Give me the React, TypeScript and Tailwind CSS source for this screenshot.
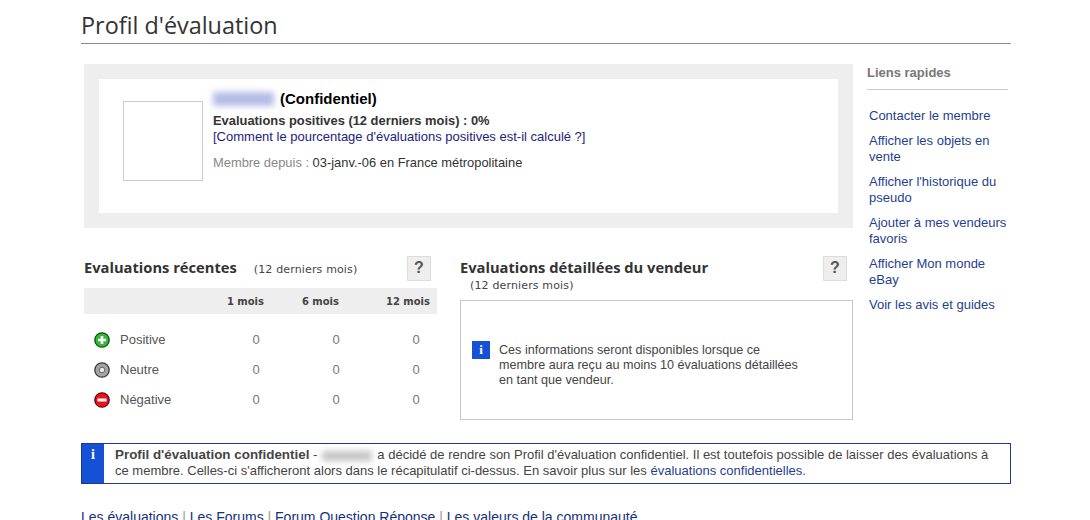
const arial = "font-['Liberation_Sans',Arial,sans-serif]"

const quickLinks = [
  'Contacter le membre',
  'Afficher les objets en vente',
  "Afficher l'historique du pseudo",
  'Ajouter à mes vendeurs favoris',
  'Afficher Mon monde eBay',
  'Voir les avis et guides',
]

function RatingIcon({ kind }: { kind: 'pos' | 'neu' | 'neg' }) {
  const fill = kind === 'pos' ? '#35b835' : kind === 'neg' ? '#ee101c' : '#a4a4a4'
  const edge = kind === 'pos' ? '#0b4f10' : kind === 'neg' ? '#5a080c' : '#3a3a3a'
  return (
    <svg width="16" height="16" viewBox="0 0 16 16">
      <circle cx="8" cy="8" r="7.2" fill={fill} stroke={edge} strokeWidth="1.3" />
      {kind === 'pos' && <path d="M6.7 4h2.6v2.7H12v2.6H9.3V12H6.7V9.3H4V6.7h2.7z" fill="#fff" />}
      {kind === 'neu' && <circle cx="8" cy="8" r="2.8" fill="#e8e8e8" stroke="#666" strokeWidth="1" />}
      {kind === 'neg' && <rect x="3.5" y="6.5" width="9" height="3" fill="#fff" />}
    </svg>
  )
}

function HelpButton() {
  return (
    <div className="w-[24px] h-[25px] bg-[#eeeeee] border border-[#dddddd] flex items-center justify-center font-['Liberation_Sans',sans-serif] font-bold text-[16px] text-[#555555]">
      ?
    </div>
  )
}

function Row({ kind, label }: { kind: 'pos' | 'neu' | 'neg'; label: string }) {
  return (
    <div className="h-[30px] flex items-center text-[13px] text-[#555555]">
      <div className="w-[36px] pl-[10px] shrink-0">
        <RatingIcon kind={kind} />
      </div>
      <div className="w-[96px] shrink-0">{label}</div>
      <div className="w-[80px] shrink-0 text-center text-[#777777]">0</div>
      <div className="w-[80px] shrink-0 text-center text-[#777777]">0</div>
      <div className="w-[80px] shrink-0 text-center text-[#777777]">0</div>
    </div>
  )
}

export default function App() {
  return (
    <div className={`h-[520px] overflow-hidden bg-white pl-[81px] pr-[79px] ${arial}`}>
      <h1 className="pt-[10px] h-[44px] border-b border-[#8c8c8c] font-['Open_Sans',sans-serif] text-[23.4px] leading-[30px] text-[#333333]">
        Profil d'évaluation
      </h1>

      <div className="flex mt-[20px]">
        <div className="w-[772px] pl-[3px]">
          <div className="bg-[#eeeeee] p-[15px] h-[164px]">
            <div className="bg-white h-[134px] pl-[24px] pt-[22px] flex">
              <div className="w-[80px] h-[80px] border border-[#cccccc]" />
              <div className="ml-[10px] -mt-[12px]">
                <div className="flex items-center h-[20px] text-[15px] font-bold text-black">
                  <div className="w-[61px] h-[14px] bg-[#b4bce6] blur-[3px] mr-[6px]" />
                  (Confidentiel)
                </div>
                <div className="text-[12.9px] leading-[16px] font-bold text-[#333333] mt-[4px]">
                  Evaluations positives (12 derniers mois) : 0%
                </div>
                <div className="text-[13px] leading-[16px] text-[#1a237e]">
                  [Comment le pourcentage d'évaluations positives est-il calculé ?]
                </div>
                <div className="text-[12.9px] leading-[16px] mt-[10px] text-[#333333]">
                  <span className="text-[#888888]">Membre depuis : </span>03-janv.-06 en France métropolitaine
                </div>
              </div>
            </div>
          </div>

          <div className="flex mt-[28px]">
            <div className="w-[353px]">
              <div className="flex items-center justify-between h-[24px] pr-[6px]">
                <div className="flex items-baseline -mt-[2px]">
                  <span className="font-['Open_Sans',sans-serif] font-bold text-[14.7px] text-[#333333]">
                    Evaluations récentes
                  </span>
                  <span className="ml-[17px] font-['DejaVu_Sans',sans-serif] text-[11px] tracking-[0.15px] text-[#444444]">
                    (12 derniers mois)
                  </span>
                </div>
                <HelpButton />
              </div>
              <div className="mt-[8px] h-[26px] bg-[#eeeeee] flex items-center font-['DejaVu_Sans',sans-serif] font-bold text-[10px] text-[#444444]">
                <div className="w-[180px] text-right">1 mois</div>
                <div className="w-[75px] text-right">6 mois</div>
                <div className="w-[91px] text-right">12 mois</div>
              </div>
              <div className="mt-[11px]">
                <Row kind="pos" label="Positive" />
                <Row kind="neu" label="Neutre" />
                <Row kind="neg" label="Négative" />
              </div>
            </div>

            <div className="ml-[23px] w-[393px]">
              <div className="flex items-center justify-between h-[24px] pr-[6px]">
                <span className="-mt-[2px] font-['Open_Sans',sans-serif] font-bold text-[14.7px] text-[#333333]">
                  Evaluations détaillées du vendeur
                </span>
                <HelpButton />
              </div>
              <div className="pl-[10px] font-['DejaVu_Sans',sans-serif] text-[11px] tracking-[0.15px] leading-[12px] text-[#444444]">
                (12 derniers mois)
              </div>
              <div className="mt-[8px] h-[120px] border border-[#c8c8c8] pl-[11px] flex items-center">
                <div className="flex items-start text-[12.6px] leading-[15px] text-[#444444] mt-[11px]">
                  <div className="w-[18px] h-[18px] -mt-[2px] bg-[#1451d6] text-white text-[13px] leading-[18px] text-center font-bold font-['Liberation_Serif',serif] shrink-0">
                    i
                  </div>
                  <div className="ml-[9px] w-[310px]">
                    Ces informations seront disponibles lorsque ce membre aura reçu au moins 10 évaluations détaillées en tant que vendeur.
                  </div>
                </div>
              </div>
            </div>
          </div>
        </div>

        <aside className="ml-[14px] w-[141px]">
          <div className="h-[26px] border-b border-[#cccccc] font-bold text-[13px] leading-[17px] text-[#777777]">
            Liens rapides
          </div>
          <ul className="pl-[2px] pt-[18px] flex flex-col gap-[9px] text-[13px] leading-[16px] text-[#1f3f8f]">
            {quickLinks.map((l) => (
              <li key={l}>{l}</li>
            ))}
          </ul>
        </aside>
      </div>

      <div className="mt-[23px] h-[41px] border border-[#1f3a80] flex text-[13px] leading-[16px] text-[#444444]">
        <div className="w-[22px] bg-[#1451d6] text-white text-center font-bold font-['Liberation_Serif',serif] text-[14px] leading-[22px] shrink-0">
          i
        </div>
        <div className="pl-[11px] pt-[3px] whitespace-nowrap">
          <span className="font-bold text-[13.4px]">Profil d'évaluation confidentiel</span> -
          <span className="inline-block w-[50px] h-[10px] mx-[5px] bg-[#c4c4c4] blur-[3px] align-middle" />
          a décidé de rendre son Profil d'évaluation confidentiel. Il est toutefois possible de laisser des évaluations à
          <br />
          ce membre. Celles-ci s'afficheront alors dans le récapitulatif ci-dessus. En savoir plus sur les{' '}
          <span className="text-[#1f3f8f]">évaluations confidentielles</span>.
        </div>
      </div>

      <div className="mt-[25px] text-[14px] leading-[16px] text-[#15307a] whitespace-nowrap">
        Les évaluations <span className="text-[#999999]">|</span> Les Forums <span className="text-[#999999]">|</span> Forum Question Réponse <span className="text-[#999999]">|</span> Les valeurs de la communauté
      </div>
    </div>
  )
}
